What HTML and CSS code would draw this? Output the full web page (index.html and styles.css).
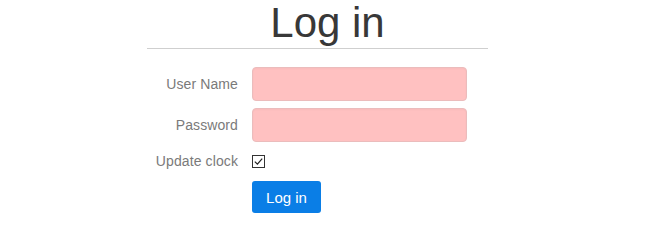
FILE: index.html
```html
<!DOCTYPE html>
<html lang="en">
<head>
<meta charset="utf-8">
<title>Log in</title>
<link rel="stylesheet" href="styles.css">
</head>
<body>
<div class="page">
  <h1 class="title">Log in</h1>
  <form class="login-form">
    <label class="field-label" for="user">User Name</label>
    <input class="text-input" id="user" type="text">
    <label class="field-label" for="pass">Password</label>
    <input class="text-input" id="pass" type="password">
    <span class="field-label">Update clock</span>
    <span class="check">
      <svg width="13" height="13" viewBox="0 0 13 13" aria-hidden="true">
        <rect x="0.5" y="0.5" width="12" height="12" fill="#fff" stroke="#333" stroke-width="1"/>
        <path d="M2.8 6.6 L5.4 9.2 L10.2 3.6" fill="none" stroke="#222" stroke-width="1.2"/>
      </svg>
    </span>
    <span class="spacer"></span>
    <button class="btn-primary" type="button">Log in</button>
  </form>
</div>
</body>
</html>
```

FILE: styles.css
```css
html, body {
  margin: 0;
  padding: 0;
  background: #fff;
}
body {
  font-family: "Liberation Sans", Arial, sans-serif;
  font-size: 14px;
  color: #333;
}
.page {
  margin-left: 147px;
  width: 341px;
}
.title {
  margin: 0;
  font-weight: normal;
  font-size: 42px;
  line-height: 45px;
  padding: 0 0 3px 20px;
  text-align: center;
  color: #383838;
  border-bottom: 1px solid #cfcfcf;
}
.login-form {
  margin-top: 18px;
  display: grid;
  grid-template-columns: 91px 215px;
  column-gap: 14px;
  row-gap: 7px;
  align-items: center;
}
.field-label {
  text-align: right;
  color: #7a7a7a;
  white-space: nowrap;
  letter-spacing: 0.1px;
}
.text-input {
  box-sizing: border-box;
  height: 34px;
  width: 215px;
  margin: 0;
  background: #ffc1c1;
  border: 1px solid #ebbcbc;
  border-radius: 4px;
  box-shadow: inset 0 1px 2px rgba(0,0,0,0.03);
  outline: none;
}
.check {
  height: 24px;
  display: flex;
  align-items: center;
}
.check svg {
  display: block;
}
.spacer {
  display: block;
}
.btn-primary {
  justify-self: start;
  margin-top: 1px;
  box-sizing: border-box;
  height: 32px;
  width: 69px;
  padding: 0;
  border: none;
  border-radius: 3px;
  background: #0a7ee6;
  color: #fff;
  font-family: "Liberation Sans", Arial, sans-serif;
  font-size: 15px;
  cursor: pointer;
}
```
